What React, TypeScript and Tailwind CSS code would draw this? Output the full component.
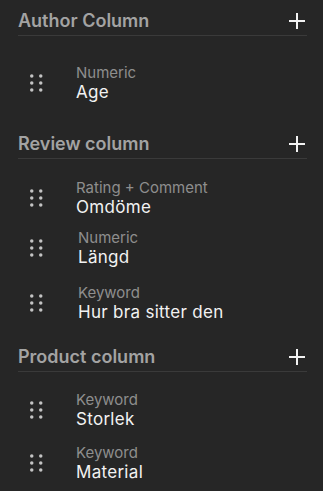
import React from "react";

type Field = {
  kind: string;
  name: string;
  top: string;
  shift?: boolean;
};

type Section = {
  title: string;
  top: string;
  listTop: string;
  fields: Field[];
};

const sections: Section[] = [
  {
    title: "Author Column",
    top: "mt-0",
    listTop: "mt-[27px]",
    fields: [{ kind: "Numeric", name: "Age", top: "mt-0" }],
  },
  {
    title: "Review column",
    top: "mt-[29px]",
    listTop: "mt-[19px]",
    fields: [
      { kind: "Rating + Comment", name: "Omdöme", top: "mt-0" },
      { kind: "Numeric", name: "Längd", top: "mt-[10px]", shift: true },
      { kind: "Keyword", name: "Hur bra sitter den", top: "mt-[15px]", shift: true },
    ],
  },
  {
    title: "Product column",
    top: "mt-[22px]",
    listTop: "mt-[18px]",
    fields: [
      { kind: "Keyword", name: "Storlek", top: "mt-0" },
      { kind: "Keyword", name: "Material", top: "mt-[13px]" },
    ],
  },
];

function DragHandle() {
  return (
    <svg width="13" height="18" viewBox="0 0 13 18" className="shrink-0 fill-[#c4c4c4]">
      <circle cx="1.75" cy="2" r="1.75" />
      <circle cx="10.75" cy="2" r="1.75" />
      <circle cx="1.75" cy="9" r="1.75" />
      <circle cx="10.75" cy="9" r="1.75" />
      <circle cx="1.75" cy="16" r="1.75" />
      <circle cx="10.75" cy="16" r="1.75" />
    </svg>
  );
}

function PlusIcon() {
  return (
    <svg width="16" height="16" viewBox="0 0 16 16" className="stroke-[#f2f2f2]">
      <line x1="8" y1="0" x2="8" y2="16" strokeWidth="2" />
      <line x1="0" y1="8" x2="16" y2="8" strokeWidth="2" />
    </svg>
  );
}

export default function App() {
  return (
    <div className="min-h-[491px] w-[323px] bg-[#262626] pt-[9px] pl-[18px] pr-[16px] font-['Inter','Liberation_Sans',sans-serif]">
      {sections.map((section) => (
        <div key={section.title} className={section.top}>
          <div className="flex items-center justify-between border-b border-[#3a3a3a] pb-[2px]">
            <h2 className="text-[18px] leading-[24px] font-semibold text-[#a3a3a3]">{section.title}</h2>
            <button className="mr-[2px]" aria-label={`Add to ${section.title}`}>
              <PlusIcon />
            </button>
          </div>
          <ul className={section.listTop}>
            {section.fields.map((field) => (
              <li key={field.name} className={`${field.top} flex items-center pl-[12px]`}>
                <DragHandle />
                <div className={`${field.shift ? "ml-[35px]" : "ml-[33px]"} flex flex-col`}>
                  <span className="text-[15px] leading-[19px] text-[#8e8e8e]">{field.kind}</span>
                  <span className="text-[17px] leading-[21px] tracking-[0.3px] text-[#f2f2f2]">{field.name}</span>
                </div>
              </li>
            ))}
          </ul>
        </div>
      ))}
    </div>
  );
}
